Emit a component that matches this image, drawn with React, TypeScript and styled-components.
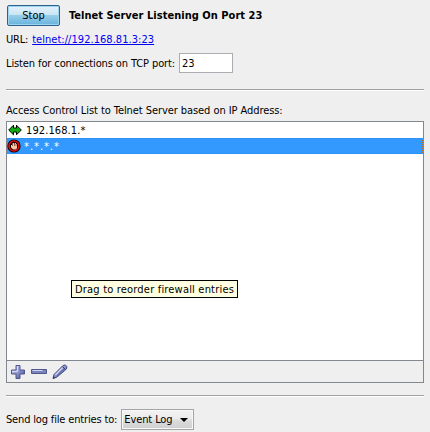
import React from 'react';
import styled, { createGlobalStyle } from 'styled-components';

const Global = createGlobalStyle`
  * { box-sizing: border-box; }
  html, body { margin: 0; padding: 0; }
  body {
    background: #efefef;
    color: #000;
    font: 11px/16px Tahoma, "DejaVu Sans Condensed", "DejaVu Sans", sans-serif;
    font-stretch: condensed;
    overflow: hidden;
  }
`;

const Panel = styled.main`
  width: 430px;
  height: 432px;
  display: flex;
  flex-direction: column;
  padding: 5px 6px 0;
`;

const Row = styled.div<{ $height: number }>`
  display: flex;
  align-items: center;
  height: ${(p) => p.$height}px;
  flex: none;
`;

const Text = styled.span<{ $spacing?: number; $drop?: number }>`
  white-space: pre;
  letter-spacing: ${(p) => p.$spacing ?? 0}px;
  padding-top: ${(p) => p.$drop ?? 0}px;
`;

const StopButton = styled.button`
  width: 53px;
  height: 21px;
  margin: 0 9px 0 1px;
  padding: 1px 0 0;
  border: 1px solid #2c628b;
  border-radius: 2px;
  box-shadow: inset 0 0 0 1px #9cd3ee;
  background: linear-gradient(#e5f3fb 0%, #c8e5f5 47%, #98cdea 50%, #68b3db 100%);
  font: inherit;
  line-height: 18px;
`;

const Title = styled.h1`
  margin: 0;
  font-size: 11px;
  line-height: 16px;
  font-weight: bold;
  white-space: nowrap;
  letter-spacing: 0.03px;
`;

const Link = styled.a`
  color: #0000f0;
  margin-left: 4px;
  text-decoration: underline;
  text-decoration-thickness: 1px;
  text-decoration-skip-ink: none;
  text-underline-offset: 1px;
  white-space: nowrap;
  letter-spacing: 0.04px;
`;

const PortInput = styled.input`
  width: 54px;
  height: 20px;
  margin-left: 4px;
  padding: 1px 2px 0;
  border: 1px solid #abadb3;
  background: #fff;
  font: inherit;
  outline: none;
`;

const Divider = styled.hr`
  width: 418px;
  height: 2px;
  flex: none;
  margin: 0;
  border: 0;
  border-top: 1px solid #a0a0a0;
  background: #fff;
`;

const ListBox = styled.section`
  position: relative;
  width: 418px;
  height: 262px;
  flex: none;
  display: flex;
  flex-direction: column;
  border: 1px solid #828790;
  margin-bottom: 12px;
`;

const Entries = styled.div`
  flex: 1;
  background: #fff;
`;

const Entry = styled.div`
  display: flex;
  align-items: center;
  gap: 4px;
  height: 16px;
  padding-left: 1px;
`;

const SelectedEntry = styled(Entry)`
  gap: 3px;
  padding-left: 0;
  color: #fff;
  background:
    repeating-linear-gradient(90deg, #cc6600 0 1px, #3399ff 1px 2px) top / 100% 1px no-repeat,
    repeating-linear-gradient(90deg, #cc6600 0 1px, #3399ff 1px 2px) bottom / 100% 1px no-repeat,
    repeating-linear-gradient(#cc6600 0 1px, #3399ff 1px 2px) right / 1px 100% no-repeat,
    #3399ff;
`;

const Toolbar = styled.div`
  display: flex;
  align-items: center;
  gap: 5px;
  height: 22px;
  padding-left: 3px;
  border-top: 1px solid #828790;
`;

const Tooltip = styled.div`
  position: absolute;
  left: 64px;
  top: 158px;
  width: 167px;
  height: 18px;
  display: flex;
  padding-left: 3px;
  border: 1px solid #000;
  background: #ffffe1;
  line-height: 16px;
`;

const Select = styled.button`
  display: flex;
  align-items: center;
  justify-content: space-between;
  width: 73px;
  height: 21px;
  margin-left: 4px;
  padding: 0 5px 0 2px;
  border: 1px solid #a5a5a5;
  box-shadow: inset 0 0 0 1px #f8f8f8;
  background: linear-gradient(#f2f2f2 0%, #ebebeb 48%, #dddddd 52%, #cfcfcf 100%);
  font: inherit;
`;

const Gap = styled.div<{ $h: number }>`
  height: ${(p) => p.$h}px;
  flex: none;
`;

const AllowIcon = () => (
  <svg width="14" height="12" viewBox="0 0 14 12">
    <path d="M.7 6 5.5 1.2V4h3V1.2L13.3 6l-4.8 4.8V8h-3v2.8z" fill="#0caf12" stroke="#000" />
  </svg>
);

const DenyIcon = () => (
  <svg width="14" height="14" viewBox="0 0 14 14">
    <circle cx="7" cy="7" r="6.6" fill="#000" />
    <circle cx="7" cy="7" r="5" fill="#160000" stroke="#e60c0c" strokeWidth="1.6" />
    <path d="M4 6h1V4.5h1V4h1v.5h1V4h1v1h1v4L9 10.5H6L4 8.5z" fill="#ffc8a0" />
    <path d="M5.5 4v3M7.5 4v3M9 5v2" stroke="#542018" strokeWidth=".6" />
  </svg>
);

const ToolDefs = () => (
  <defs>
    <linearGradient id="metal" x1="0" y1="0" x2="1" y2="1">
      <stop offset="0" stopColor="#d5d9f2" />
      <stop offset=".5" stopColor="#8d95cc" />
      <stop offset="1" stopColor="#424983" />
    </linearGradient>
  </defs>
);

const AddIcon = () => (
  <svg width="16" height="16" viewBox="0 0 16 16">
    <ToolDefs />
    <path d="M6 1.5h4V6h4.5v4H10v4.5H6V10H1.5V6H6z" fill="url(#metal)" stroke="#50578e" />
    <path d="M7.5 2v5.5H2" fill="none" stroke="#d8dcf5" />
  </svg>
);

const RemoveIcon = () => (
  <svg width="16" height="16" viewBox="0 0 16 16">
    <path d="M.5 5.5h15v4H.5z" fill="#7b83bb" stroke="#50578e" />
    <path d="M1.5 6.5h10" stroke="#d0d5f1" />
  </svg>
);

const EditIcon = () => (
  <svg width="16" height="16" viewBox="0 0 16 16">
    <path d="m1 14.5 1-4L10.5 2l1.5-.9h1.5l1.3 1.5v1.5l-1 1.5L5 13z" fill="url(#metal)" stroke="#424a80" />
    <path d="m3.5 10.8 7-7" stroke="#d3d8f2" strokeWidth="1.2" />
    <path d="m5 12 7.5-7.5" stroke="#646da8" strokeWidth="1.4" />
    <path d="m10.5 2.5 3 3" stroke="#373e75" />
    <path d="m.8 14.8 2.7-.8L1.6 12z" fill="#373e75" />
  </svg>
);

const ArrowIcon = () => (
  <svg width="8" height="4" viewBox="0 0 8 4">
    <path d="M0 0h8L4 4z" />
  </svg>
);

export default function App() {
  return (
    <>
      <Global />
      <Panel>
        <Row $height={21}>
          <StopButton>Stop</StopButton>
          <Title>Telnet Server Listening On Port 23</Title>
        </Row>
        <Gap $h={6} />
        <Row $height={16}>
          <Text $spacing={-0.2}>URL:</Text>
          <Link href="telnet://192.168.81.3:23">telnet://192.168.81.3:23</Link>
        </Row>
        <Gap $h={5} />
        <Row $height={20}>
          <Text $spacing={-0.11} $drop={1}>Listen for connections on TCP port:</Text>
          <PortInput defaultValue="23" />
        </Row>
        <Gap $h={16} />
        <Divider />
        <Gap $h={10} />
        <Row $height={20}>
          <Text $spacing={-0.07}>Access Control List to Telnet Server based on IP Address:</Text>
        </Row>
        <ListBox>
          <Entries>
            <Entry>
              <AllowIcon />
              <Text $spacing={0.1} $drop={1}>192.168.1.*</Text>
            </Entry>
            <SelectedEntry>
              <DenyIcon />
              <Text $spacing={0.95} $drop={1}>*.*.*.*</Text>
            </SelectedEntry>
          </Entries>
          <Toolbar>
            <AddIcon />
            <RemoveIcon />
            <EditIcon />
          </Toolbar>
          <Tooltip>
            <Text $spacing={0.19} $drop={1}>Drag to reorder firewall entries</Text>
          </Tooltip>
        </ListBox>
        <Divider />
        <Gap $h={12} />
        <Row $height={21}>
          <Text $spacing={-0.16}>Send log file entries to:</Text>
          <Select>
            <Text $spacing={-0.1}>Event Log</Text>
            <ArrowIcon />
          </Select>
        </Row>
      </Panel>
    </>
  );
}
